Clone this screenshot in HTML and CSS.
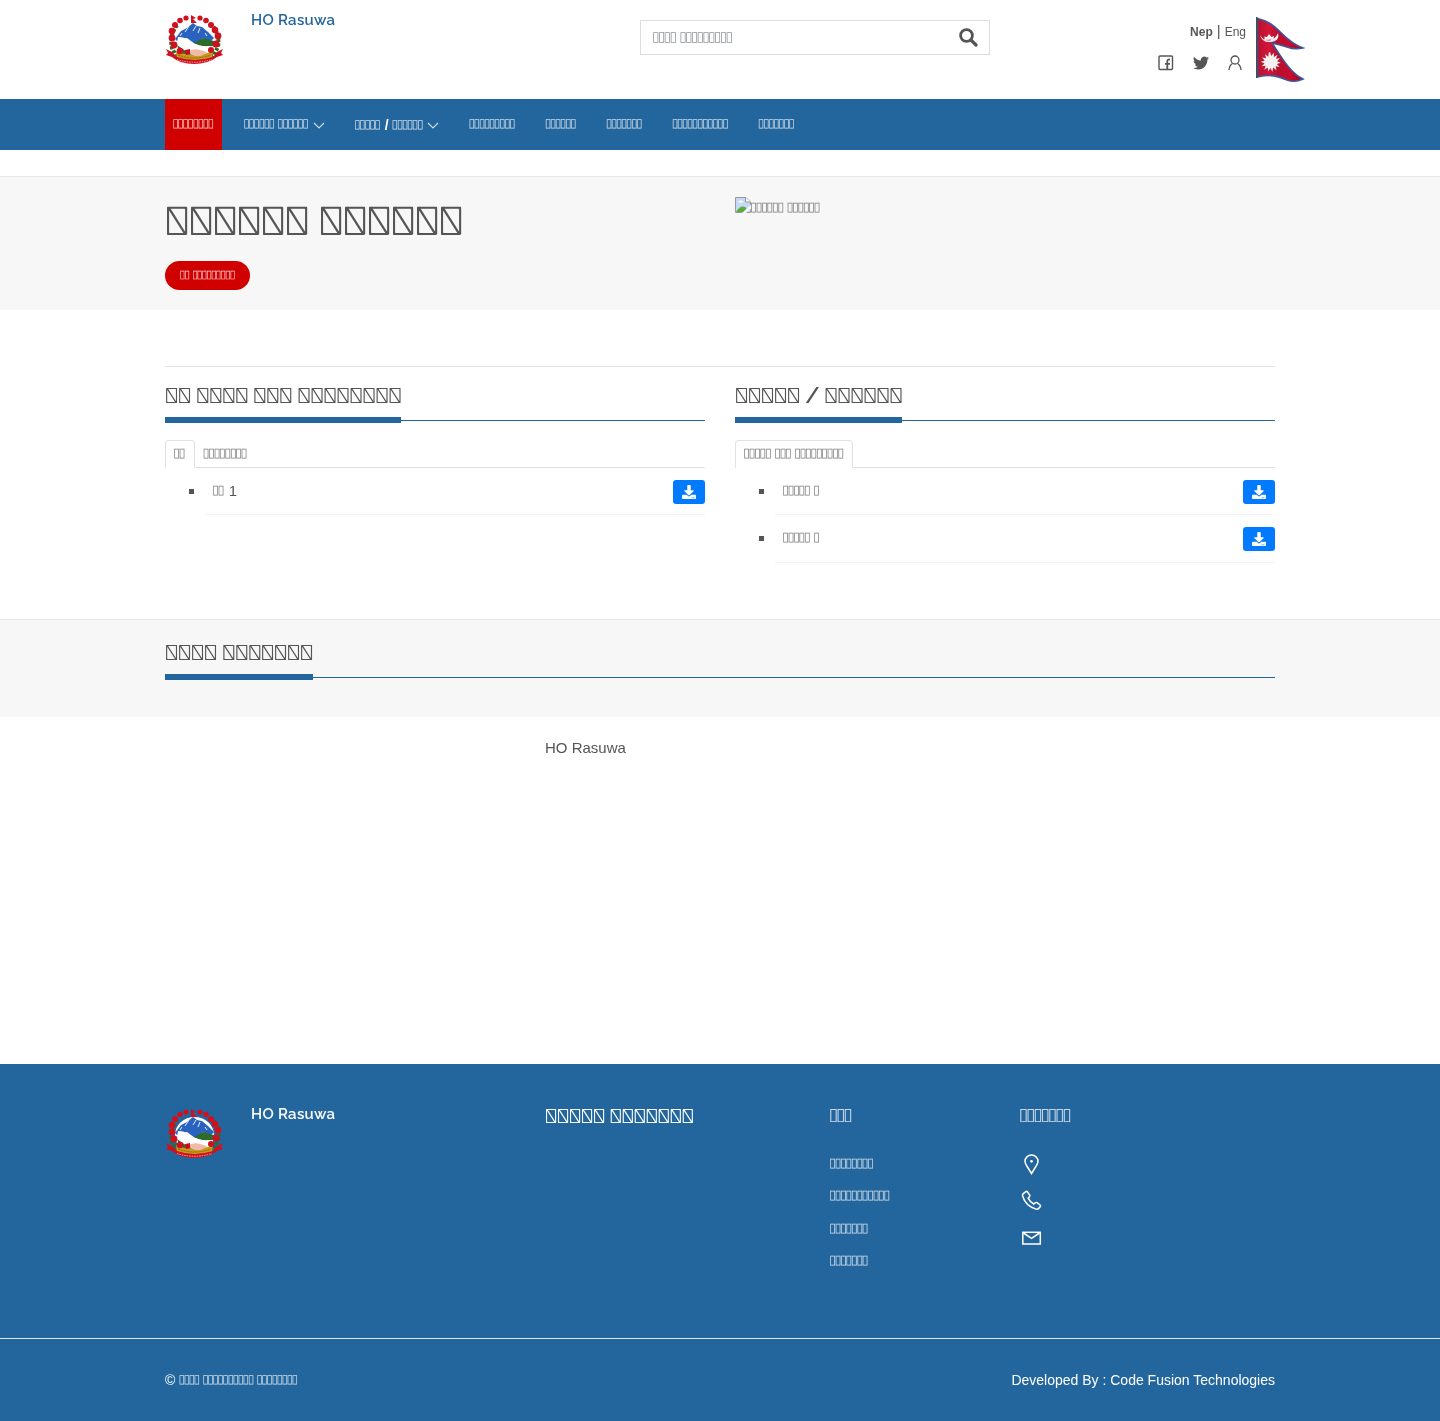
FILE: index.html
```html
<!DOCTYPE html>
<html lang="ne">
<head>
<meta charset="utf-8">
<title>HO Rasuwa</title>
<link rel="stylesheet" href="styles.css">
</head>
<body>
<svg class="sprite" width="0" height="0">
  <defs>
    <symbol id="emblem" viewBox="0 0 59 52">
      <path d="M12 11 Q4 22 7 34 L11 42 H48 L53 33 Q55 20 47 11" fill="none" stroke="#2c6b2c" stroke-width="4" stroke-dasharray="3 1.5"/>
      <ellipse class="sky" cx="29.500" cy="27" rx="19.500" ry="18"/>
      <path d="M10 25 L16 17 L22 14 L28 9 L32 12 L37 13 L43 18 L49 24 L45 28 L38 24 L30 30 L22 24 L12 27 Z" fill="#2a62c0"/>
      <path d="M24 12 l-4 6 M31 12 l-3 5 M35 14 l-2 5 M17 19 l-2 3 M40 19 l2 3" stroke="#e8f0ff" stroke-width="1"/>
      <path d="M29 29 L38 24 L49 27 L48 32 L36 33 Z M12 31 L22 38 L30 40 L16 42 Z" fill="#2c6b2c"/>
      <path d="M13 23 Q21 23 26 28 Q35 33 45 32 L46 39 Q34 38 27 37 Q17 35 12 29 Z" fill="#fff"/>
      <path d="M11 37 Q29 45 48 37 L47 45 Q29 49 12 45 Z" fill="#c9981c"/>
      <path d="M13 41 Q29 47 46 41" fill="none" stroke="#8a6a10" stroke-width="1" stroke-dasharray="2 1"/>
      <path d="M22 38 Q28 34 35 36 L42 38 Q38 43 30 42 Z" fill="#f0b9a8"/>
      <path d="M20 36 l5 -1 l0 5 l-4 1 Z" fill="#cc0a1c"/>
      <g fill="#d0101f">
        <circle cx="21" cy="4" r="2.600"/><circle cx="15" cy="6.500" r="2.800"/><circle cx="10" cy="11" r="3"/><circle cx="7" cy="17" r="3.300"/><circle cx="7" cy="24" r="3.400"/><circle cx="9" cy="31" r="3.400"/><circle cx="15" cy="37" r="3.300"/>
        <circle cx="35" cy="4" r="2.600"/><circle cx="41" cy="6.500" r="2.800"/><circle cx="46" cy="11" r="3"/><circle cx="50" cy="16" r="3.300"/><circle cx="53" cy="22" r="3.400"/><circle cx="51" cy="30" r="3.600"/><circle cx="46" cy="36" r="3"/>
        <path d="M26 1 l5 3 l-3 1 l4 4 h-6 Z"/>
        <path d="M1 35 L7 38 L12 43 Q29 49 48 43 L52 38 L58 35 L56 39 L58 41 L52 43 Q43 50 29 50 Q15 50 7 43 L1 41 L3 39 Z"/>
      </g>
      <path d="M12 45.500 Q29 51 47 45.500" fill="none" stroke="#f1a5a5" stroke-width="1" stroke-dasharray="1.500 1"/>
    </symbol>
    <symbol id="download" viewBox="0 0 512 512">
      <path fill="currentColor" d="M216 0h80c13 0 24 11 24 24v168h88c18 0 27 21 14 34L270 378c-8 8-20 8-28 0L90 226c-13-13-4-34 14-34h88V24c0-13 11-24 24-24zm296 376v112c0 13-11 24-24 24H24c-13 0-24-11-24-24V376c0-13 11-24 24-24h147l49 49c20 20 52 20 72 0l49-49h147c13 0 24 11 24 24zm-124 88c0-11-9-20-20-20s-20 9-20 20 9 20 20 20 20-9 20-20zm64 0c0-11-9-20-20-20s-20 9-20 20 9 20 20 20 20-9 20-20z"/>
    </symbol>
    <symbol id="chevron" viewBox="0 0 12 7"><path d="M1 1 L6 6 L11 1" fill="none" stroke="currentColor" stroke-width="1.200"/></symbol>
  </defs>
</svg>

<header class="container top">
  <a class="brand"><svg class="emblem"><use href="#emblem"/></svg><span class="brand-name">HO Rasuwa</span></a>
  <div class="search"><span class="g">▯▯▯▯ ▯▯▯▯▯▯▯▯▯</span>
    <svg width="19" height="19" viewBox="0 0 19 19"><circle cx="7.500" cy="7.500" r="5.900" fill="none" stroke="#555" stroke-width="2.800"/><path d="M12 12 L17 17" stroke="#555" stroke-width="3.200" stroke-linecap="round"/></svg>
  </div>
  <div class="tools">
    <div class="tool-cols">
      <div class="lang"><b>Nep</b><i>|</i><span>Eng</span></div>
      <div class="social">
        <svg width="16" height="16" viewBox="0 0 16 16"><rect x="1" y="1" width="13.500" height="13.500" rx="1" fill="none" stroke="#555" stroke-width="1.400"/><path d="M9.300 14.500V8.900M7 8.900h5M9.300 9V6.200q0-2 2.700-1.800" fill="none" stroke="#555" stroke-width="1.800"/></svg>
        <svg width="16" height="16" viewBox="0 0 24 24"><path fill="#555" d="M24 4.600a10 10 0 0 1-2.800.8 5 5 0 0 0 2.200-2.700c-1 .5-2 1-3.100 1.200a4.900 4.900 0 0 0-8.400 4.500C7.700 8.100 4.100 6.100 1.700 3.100a4.900 4.900 0 0 0 1.500 6.600 5 5 0 0 1-2.200-.6v.1a4.900 4.900 0 0 0 3.900 4.800 5 5 0 0 1-2.200.1 4.900 4.900 0 0 0 4.600 3.400A9.900 9.900 0 0 1 0 19.500a14 14 0 0 0 7.500 2.200c9.100 0 14-7.500 14-14v-.6A10 10 0 0 0 24 4.600z"/></svg>
        <svg width="16" height="16" viewBox="0 0 16 16" fill="none" stroke="#555" stroke-width="1.300"><circle cx="8" cy="5" r="4"/><path d="M2 15Q2.300 10.500 5.500 8.500M14 15Q13.700 10.500 10.500 8.500"/></svg>
      </div>
    </div>
    <svg class="flag" width="49" height="66" viewBox="0 0 49 66">
      <defs><linearGradient id="cloth"><stop offset="0" stop-color="#b5122f"/><stop offset=".25" stop-color="#d4163a"/><stop offset=".45" stop-color="#b5112f"/><stop offset=".7" stop-color="#cc0a2c"/><stop offset="1" stop-color="#9c0824"/></linearGradient></defs>
      <path d="M1.500 1.500 Q8 3 14 6.500 C24 12 30 25 47 31 Q39 33 31 30 Q25 28 16 26 C24 38 34 56 47 62 Q39 66 31 63 C22 59 15 57 1.500 60 Z" fill="url(#cloth)" stroke="#3c559b" stroke-width="1.600"/>
      <path d="M.8 0V61" stroke="#454b57" stroke-width="1.600"/>
      <path d="M4 18 Q7 23.500 13 23.500 Q19 23 22 16 Q24 24 15 25 Q6 26 4 18Z M8.500 23 V19.500 L11 20 L13 17 L15.500 20 L18 19 L17.500 22.500Z" fill="#f5f2f2"/>
      <path d="M14 35l1.300 4 2.500-3.300.1 4.200 3.600-2.100-1.500 3.900 4-.4-2.900 3 3.700 1.400-3.900 1.300 2.700 3.100-4-.9.900 4.100-3.400-2.700-.6 4.100-2.200-3.700-2 3.600-.6-4.100-3.300 2.300 1.200-4-4 .4 2.900-2.800-3.800-1.600 4-1.100-2.600-3.100 4 .7-1.100-4 3.300 2.500.5-4.200Z" fill="#f5f2f2"/>
    </svg>
  </div>
</header>

<nav class="nav"><div class="container nav-row">
  <a class="active"><span class="g">▯▯▯▯▯▯▯▯</span></a>
  <a><span class="g">▯▯▯▯▯▯ ▯▯▯▯▯▯</span><svg width="12" height="7"><use href="#chevron"/></svg></a>
  <a><span><span class="g">▯▯▯▯▯</span> / <span class="g">▯▯▯▯▯▯</span></span><svg width="12" height="7"><use href="#chevron"/></svg></a>
  <a><span class="g">▯▯▯▯▯▯▯▯▯</span></a>
  <a><span class="g">▯▯▯▯▯▯</span></a>
  <a><span class="g">▯▯▯▯▯▯▯</span></a>
  <a><span class="g">▯▯▯▯▯▯▯▯▯▯▯</span></a>
  <a><span class="g">▯▯▯▯▯▯▯</span></a>
</div></nav>

<section class="hero"><div class="container row">
  <div class="col"><h1>&#xE123;&#xE123;&#xE123;&#xE123;&#xE123;&#xE123; &#xE123;&#xE123;&#xE123;&#xE123;&#xE123;&#xE123;</h1><a class="more"><span class="g">▯▯ ▯▯▯▯▯▯▯▯▯</span></a></div>
  <div class="col photo">
    <svg width="16" height="16" viewBox="0 0 16 16"><path d="M.5.500H11L15.500 5V15.500H.5Z" fill="#c6d8f5" stroke="#999"/><path d="M10.500.500V5H15.500" fill="#fff" stroke="#999"/><path d="M3 5.500q0-1.500 1.500-1.500q1-1.500 2.500 0q1.500 0 1.500 1.500Z" fill="#fff"/><path d="M1 15Q7 6 12 12L9 15Z" fill="#5aad3c"/><path d="M7 16 L16 7.500 V12 L11 16Z" fill="#f7f7f7"/></svg><span class="alt"><span class="g">▯▯▯▯▯▯ ▯▯▯▯▯▯</span></span>
  </div>
</div></section>

<main class="container notices">
  <div class="row">
    <section class="col">
      <h2 class="title"><span>&#xE123;&#xE123; &#xE123;&#xE123;&#xE123;&#xE123; &#xE123;&#xE123;&#xE123; &#xE123;&#xE123;&#xE123;&#xE123;&#xE123;&#xE123;&#xE123;&#xE123;</span></h2>
      <div class="tabs"><a class="on"><span class="g">▯▯</span></a><a><span class="g">▯▯▯▯▯▯▯▯</span></a></div>
      <ul class="files"><li><span class="g">▯▯</span> 1<a class="dl"><svg width="14" height="14"><use href="#download"/></svg></a></li></ul>
    </section>
    <section class="col">
      <h2 class="title"><span>&#xE123;&#xE123;&#xE123;&#xE123;&#xE123; / &#xE123;&#xE123;&#xE123;&#xE123;&#xE123;&#xE123;</span></h2>
      <div class="tabs"><a class="on"><span class="g">▯▯▯▯▯ ▯▯▯ ▯▯▯▯▯▯▯▯▯</span></a></div>
      <ul class="files">
        <li><span class="g">▯▯▯▯▯ ▯</span><a class="dl"><svg width="14" height="14"><use href="#download"/></svg></a></li>
        <li><span class="g">▯▯▯▯▯ ▯</span><a class="dl"><svg width="14" height="14"><use href="#download"/></svg></a></li>
      </ul>
    </section>
  </div>
</main>

<section class="gallery"><div class="container"><h2 class="title"><span>&#xE123;&#xE123;&#xE123;&#xE123; &#xE123;&#xE123;&#xE123;&#xE123;&#xE123;&#xE123;&#xE123;</span></h2></div></section>

<section class="container feed"><p>HO Rasuwa</p></section>

<footer>
  <div class="container foot">
    <a class="brand"><svg class="emblem"><use href="#emblem"/></svg><span class="brand-name">HO Rasuwa</span></a>
    <h3 class="links-title">&#xE123;&#xE123;&#xE123;&#xE123;&#xE123; &#xE123;&#xE123;&#xE123;&#xE123;&#xE123;&#xE123;&#xE123;</h3>
    <div class="pages"><h4><span class="g">▯▯▯</span></h4><a><span class="g">▯▯▯▯▯▯▯▯</span></a><a><span class="g">▯▯▯▯▯▯▯▯▯▯▯</span></a><a><span class="g">▯▯▯▯▯▯▯</span></a><a><span class="g">▯▯▯▯▯▯▯</span></a></div>
    <div class="contact"><h4><span class="g">▯▯▯▯▯▯▯</span></h4>
      <svg width="24" height="24" viewBox="0 0 24 24"><path d="M11.500 21.500L6.500 13.500Q5 11 5 9.300a6.500 6.300 0 0 1 13 0Q18 11 16.500 13.500Z"/><circle cx="11.500" cy="9.300" r="1.400" fill="#fff" stroke="none"/></svg>
      <svg width="24" height="24" viewBox="0 0 24 24"><path d="M3.300 4.600L5.800 2.600Q6.800 2 7.500 3L9.700 6.200Q10.200 7 9.500 7.700L8.100 9.200Q10 13 13.700 15L15.500 13.700Q16.300 13.200 17.100 13.700L20.100 16Q21 16.800 20.200 17.700L18.500 19.600Q17.500 20.500 16 20.100Q5.500 17 2.500 6.800Q2.200 5.500 3.300 4.600Z"/></svg>
      <svg width="24" height="24" viewBox="0 0 24 24"><rect x="2.800" y="6.300" width="17.500" height="11.700"/><path d="M3.500 7L11.500 12.300L19.500 7"/></svg>
    </div>
  </div>
  <div class="legal"><div class="container legal-row"><span>© <span class="g">▯▯▯▯ ▯▯▯▯▯▯▯▯▯▯ ▯▯▯▯▯▯▯▯</span></span><span>Developed By : Code Fusion Technologies</span></div></div>
</footer>
</body>
</html>
```
FILE: styles.css
```css
*{box-sizing:border-box}
html{background:#fff}
body{margin:0;font:15px/24px "Liberation Sans",sans-serif;color:#555;will-change:transform}
h1,h2,h3,h4,p,ul{margin:0;padding:0;font-weight:500}
svg{display:block}
.sprite{display:none}
.container{width:1140px;margin:0 auto;padding:0 15px}
.row{display:flex;gap:30px}
.col{flex:1}
/* condensed box glyphs */
.g{font-size:.86em;font-weight:400;line-height:1;letter-spacing:-.13em;word-spacing:.145em;vertical-align:.15em;margin-left:-.07em;margin-right:.12em;opacity:.75;text-rendering:geometricPrecision}
.top{height:99px;display:flex;align-items:flex-start;padding-right:0}
.brand{display:flex;width:475px;color:#23669d}
.emblem{width:59px;height:52px;margin:14px 27px 0 0}
.sky{fill:#fff}
.brand-name{font:600 15px/18px Raleway,sans-serif;letter-spacing:.3px;padding-top:11px}
.search{width:350px;height:35px;margin-top:20px;border:1px solid #ddd;display:flex;justify-content:space-between;align-items:center;padding:0 11.500px 0 12px;color:#6c757d;font-size:16px}
.search .g{padding-bottom:1px}
.tools{margin-left:auto;display:flex;gap:10px;padding-top:17px}
.tool-cols{padding-top:5px}
.lang{display:flex;justify-content:flex-end;gap:4px;font-size:12px;line-height:20px}
.lang i{font-style:normal;font-size:15px;line-height:18px}
.social{display:flex;gap:18.500px;margin-top:13px;padding-right:3px}
.flag{margin-right:-15px}
.nav{height:51px;background:#23669d}
.nav-row{display:flex;gap:14px}
.nav a{display:flex;align-items:center;gap:4px;padding:0 8px;height:51px;color:#fff;font-size:14px;font-weight:700;white-space:pre}
.nav a>.g{padding-bottom:2px}
.nav a.active{background:#d00000}
.nav svg{opacity:.75;margin-top:2px}
.hero{margin-top:26px;height:134px;background:#f7f7f7;border-top:1px solid #e8e8e8;padding-top:20px}
h1{font:500 40px/48px Raleway,sans-serif;letter-spacing:-.3px;margin-bottom:16px}
.more{display:inline-block;height:29px;padding:0 15px;border-radius:15px;background:#d00000;color:#fff;font-size:13px;line-height:29px}
.photo{display:flex;align-items:flex-start}
.alt{line-height:22px}
.notices{margin-top:56px;height:253px}
.notices .row{border-top:1px solid #e2e2e2;padding-top:16px}
.title{display:flex;border-bottom:1px solid #23669d;height:38px;font:600 21.6px/26px Raleway,sans-serif;letter-spacing:-.14px}
.title span{height:40px;border-bottom:6px solid #23669d}
.tabs{display:flex;margin-top:19px;height:28px;border-bottom:1px solid #dee2e6;font-size:15px}
.tabs a{height:28px;padding:0 8px;border:1px solid transparent;line-height:26px}
.tabs .on{border-color:#dee2e6;border-bottom-color:#fff;border-radius:4px 4px 0 0}
.files{padding-left:40px;list-style:square;font-size:15px}
.files li{border-bottom:1px solid #f3f3f3;height:47.400px;padding:11px 0 0 8px}
.dl{float:right;width:32px;height:24px;margin-top:1px;border-radius:3px;background:#007bff;color:#fff;padding:5px 9px}
.gallery{height:98px;background:#f7f7f7;border-top:1px solid #e8e8e8;padding-top:20px}
.feed{height:347px;padding-top:19px;padding-left:395px}
footer{background:#23669d;color:#fff}
footer .sky{fill:#23669d}
.foot{height:274px;display:flex;padding-top:30px}
.foot .brand{width:380px;color:#fff}
.links-title{width:285px;font:500 20px/24px Raleway,sans-serif;letter-spacing:-.17px;padding-top:10px}
.pages{width:190px;padding-top:10px}
h4{font-size:20px;line-height:24px}
.pages a{display:block;line-height:24px;font-size:15px;margin-bottom:8.400px}
.pages h4{margin-bottom:24px}
.contact{padding-top:10px}
.contact svg{fill:none;stroke:#fff;stroke-width:1.500;margin-bottom:13px}
.contact h4{margin-bottom:24px}
.legal{border-top:1px solid #dfe8f0;height:83px}
.legal-row{display:flex;justify-content:space-between;font-size:14px;padding-top:29px}
```
